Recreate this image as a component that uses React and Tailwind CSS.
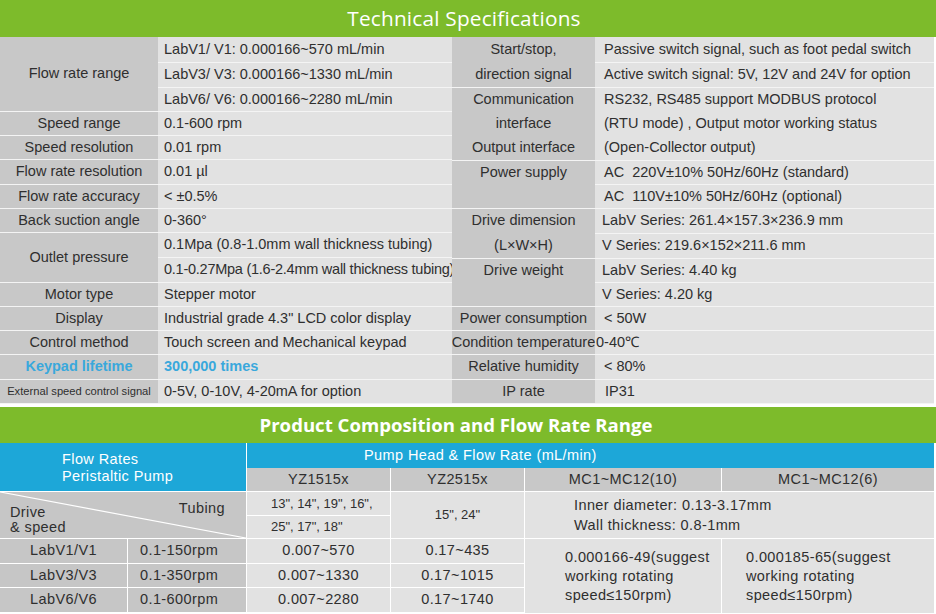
import React from 'react';

const sans = { fontFamily: '"Liberation Sans", Arial, sans-serif' };
const title = { fontFamily: '"Open Sans", "Liberation Sans", sans-serif' };

const line = 'border-b border-[#f4f4f4]';

const Label = ({ h, children, className = '' }) => (
    <div className={`${h} ${line} flex items-center justify-center text-center whitespace-nowrap ${className}`}>
        {children}
    </div>
);

const Value = ({ h, children, className = 'pl-[6px]' }) => (
    <div className={`${h} ${line} flex items-center whitespace-pre ${className}`}>
        {children}
    </div>
);

// several text lines inside one merged cell, no rule between them
const Stack = ({ h, lines, center, className = '' }) => (
    <div className={`${h} ${line} flex flex-col whitespace-pre ${className}`}>
        {lines.map((t, i) => (
            <div key={i} className={`flex-1 flex items-center ${center ? 'justify-center' : ''}`}>{t}</div>
        ))}
    </div>
);

const leftValues = [
    ['h-[26px]', 'LabV1/ V1: 0.000166~570 mL/min'],
    ['h-[25px]', 'LabV3/ V3: 0.000166~1330 mL/min'],
    ['h-[24px]', 'LabV6/ V6: 0.000166~2280 mL/min'],
    ['h-[24px]', '0.1-600 rpm'],
    ['h-[24px]', '0.01 rpm'],
    ['h-[25px]', '0.01 µl'],
    ['h-[24px]', '< ±0.5%'],
    ['h-[24px]', '0-360°'],
    ['h-[25px]', '0.1Mpa (0.8-1.0mm wall thickness tubing)'],
];

const tubeRows = [
    ['LabV1/V1', '0.1-150rpm', '0.007~570', '0.17~435'],
    ['LabV3/V3', '0.1-350rpm', '0.007~1330', '0.17~1015'],
    ['LabV6/V6', '0.1-600rpm', '0.007~2280', '0.17~1740'],
];

export default function App() {
    return (
        <div className="w-[936px] h-[614px] bg-white overflow-hidden text-[#2f2f2f]" style={sans}>
            <div className="h-[37px] bg-[#7dbb2b] flex items-center justify-center pr-[8px]">
                <h1 className="text-white text-[20.8px] tracking-[0.2px]" style={title}>Technical Specifications</h1>
            </div>

            <div className="flex w-[934px] h-[367px] text-[14.5px]">
                <div className="w-[158px] bg-[#c8c8c8] flex flex-col">
                    <Label h="h-[75px]">Flow rate range</Label>
                    <Label h="h-[24px]">Speed range</Label>
                    <Label h="h-[24px]">Speed resolution</Label>
                    <Label h="h-[25px]">Flow rate resolution</Label>
                    <Label h="h-[24px]">Flow rate accuracy</Label>
                    <Label h="h-[24px]">Back suction angle</Label>
                    <Label h="h-[50px]">Outlet pressure</Label>
                    <Label h="h-[24px]">Motor type</Label>
                    <Label h="h-[24px]">Display</Label>
                    <Label h="h-[24px]">Control method</Label>
                    <Label h="h-[25px]" className="font-bold text-[#3aa8dc]">Keypad lifetime</Label>
                    <Label h="h-[24px]" className="text-[11.2px]">External speed control signal</Label>
                </div>

                <div className="relative z-10 w-[294px] bg-[#e2e2e2] flex flex-col">
                    {leftValues.map(([h, t], i) => (
                        <Value key={i} h={h}>{t}</Value>
                    ))}
                    <Value h="h-[25px]" className="pl-[6px] tracking-[-0.25px]">0.1-0.27Mpa (1.6-2.4mm wall thickness tubing)</Value>
                    <Value h="h-[24px]">Stepper motor</Value>
                    <Value h="h-[24px]">Industrial grade 4.3" LCD color display</Value>
                    <Value h="h-[24px]">Touch screen and Mechanical keypad</Value>
                    <Value h="h-[25px]" className="pl-[6px] font-bold text-[#3aa8dc]">300,000 times</Value>
                    <Value h="h-[24px]">0-5V, 0-10V, 4-20mA for option</Value>
                </div>

                <div className="relative z-10 w-[143px] bg-[#c8c8c8] flex flex-col">
                    <Stack h="h-[51px]" center lines={['Start/stop,', 'direction signal']} />
                    <Stack h="h-[73px]" center lines={['Communication', 'interface', 'Output interface']} />
                    <Stack h="h-[48px]" center lines={['Power supply', '']} />
                    <Stack h="h-[50px]" center lines={['Drive dimension', '(L×W×H)']} />
                    <Stack h="h-[48px]" center lines={['Drive weight', '']} />
                    <Label h="h-[24px]">Power consumption</Label>
                    <Label h="h-[24px]">Condition temperature</Label>
                    <Label h="h-[25px]">Relative humidity</Label>
                    <Label h="h-[24px]">IP rate</Label>
                </div>

                <div className="flex-1 bg-[#e2e2e2] flex flex-col">
                    <Value h="h-[26px]" className="pl-[9px]">Passive switch signal, such as foot pedal switch</Value>
                    <Value h="h-[25px]" className="pl-[9px]">Active switch signal: 5V, 12V and 24V for option</Value>
                    <Stack h="h-[73px]" className="pl-[9px]" lines={['RS232, RS485 support MODBUS protocol', '(RTU mode) , Output motor working status', '(Open-Collector output)']} />
                    <Value h="h-[24px]" className="pl-[9px]">AC  220V±10% 50Hz/60Hz (standard)</Value>
                    <Value h="h-[24px]" className="pl-[9px]">AC  110V±10% 50Hz/60Hz (optional)</Value>
                    <Value h="h-[25px]" className="pl-[7px]">LabV Series: 261.4×157.3×236.9 mm</Value>
                    <Value h="h-[25px]" className="pl-[7px]">V Series: 219.6×152×211.6 mm</Value>
                    <Value h="h-[24px]" className="pl-[7px]">LabV Series: 4.40 kg</Value>
                    <Value h="h-[24px]" className="pl-[7px]">V Series: 4.20 kg</Value>
                    <Value h="h-[24px]" className="pl-[9px]">{'< 50W'}</Value>
                    <Value h="h-[24px]" className="pl-[1px]">0-40℃</Value>
                    <Value h="h-[25px]" className="pl-[9px]">{'< 80%'}</Value>
                    <Value h="h-[24px]" className="pl-[10px]">IP31</Value>
                </div>
            </div>

            <div className="mt-[3px] h-[36px] bg-[#7dbb2b] flex items-center justify-center pr-[24px]">
                <h2 className="text-white font-bold text-[18.6px]" style={title}>Product Composition and Flow Rate Range</h2>
            </div>

            <div className="w-[934px] text-[14.5px] tracking-[0.4px]">
                <div className="flex h-[49px] border-b border-white">
                    <div className="w-[247px] bg-[#1da7d8] border-r border-white flex flex-col justify-center pl-[62px] pt-[2px] text-white leading-[17px]">
                        <span>Flow Rates</span>
                        <span>Peristaltic Pump</span>
                    </div>
                    <div className="flex-1 flex flex-col">
                        <div className="h-[25px] bg-[#1da7d8] text-white flex items-center pl-[117px]">Pump Head &amp; Flow Rate (mL/min)</div>
                        <div className="flex-1 flex bg-[#c8c8c8]">
                            <div className="w-[144px] border-r border-white flex items-center justify-center">YZ1515x</div>
                            <div className="w-[134px] border-r border-white flex items-center justify-center">YZ2515x</div>
                            <div className="w-[197px] border-r border-white flex items-center justify-center">MC1~MC12(10)</div>
                            <div className="flex-1 flex items-center justify-center">MC1~MC12(6)</div>
                        </div>
                    </div>
                </div>

                <div className="flex h-[47px] border-b border-white">
                    <div className="relative w-[247px] bg-[#c6c6c6] border-r border-white flex justify-between">
                        <svg className="absolute inset-0 w-full h-full" preserveAspectRatio="none" viewBox="0 0 100 100">
                            <line x1="0" y1="0" x2="100" y2="100" stroke="#fff" strokeWidth="1.2" vectorEffect="non-scaling-stroke" />
                        </svg>
                        <div className="relative flex flex-col justify-end pl-[10px] pb-[3px] leading-[15px]">
                            <span>Drive</span>
                            <span>&amp; speed</span>
                        </div>
                        <div className="relative pr-[21px] pt-[6px]">Tubing</div>
                    </div>
                    <div className="w-[144px] bg-[#e2e2e2] border-r border-white flex flex-col text-[13px] tracking-normal">
                        <div className="flex-1 flex items-center pl-[24px] border-b border-white">13", 14", 19", 16",</div>
                        <div className="flex-1 flex items-center pl-[24px]">25", 17", 18"</div>
                    </div>
                    <div className="w-[134px] bg-[#e2e2e2] border-r border-white flex items-center justify-center text-[13px] tracking-normal">15", 24"</div>
                    <div className="flex-1 bg-[#e2e2e2] flex flex-col justify-center pl-[49px] leading-[20px]">
                        <span>Inner diameter: 0.13-3.17mm</span>
                        <span>Wall thickness: 0.8-1mm</span>
                    </div>
                </div>

                <div className="flex h-[74px]">
                    <div className="w-[525px] flex flex-col">
                        {tubeRows.map(([drive, speed, a, b]) => (
                            <div key={drive} className="flex-1 flex border-b border-white">
                                <div className="w-[128px] bg-[#c6c6c6] border-r border-white flex items-center justify-center">{drive}</div>
                                <div className="w-[119px] bg-[#c6c6c6] border-r border-white flex items-center pl-[12px]">{speed}</div>
                                <div className="w-[144px] bg-[#e2e2e2] border-r border-white flex items-center justify-center">{a}</div>
                                <div className="flex-1 bg-[#e2e2e2] border-r border-white flex items-center justify-center">{b}</div>
                            </div>
                        ))}
                    </div>
                    <div className="w-[197px] bg-[#e2e2e2] border-r border-white flex flex-col justify-center pl-[40px] leading-[19px]">
                        <span>0.000166-49(suggest</span>
                        <span>working rotating</span>
                        <span>speed≤150rpm)</span>
                    </div>
                    <div className="flex-1 bg-[#e2e2e2] flex flex-col justify-center pl-[24px] leading-[19px]">
                        <span>0.000185-65(suggest</span>
                        <span>working rotating</span>
                        <span>speed≤150rpm)</span>
                    </div>
                </div>
            </div>
        </div>
    );
}
